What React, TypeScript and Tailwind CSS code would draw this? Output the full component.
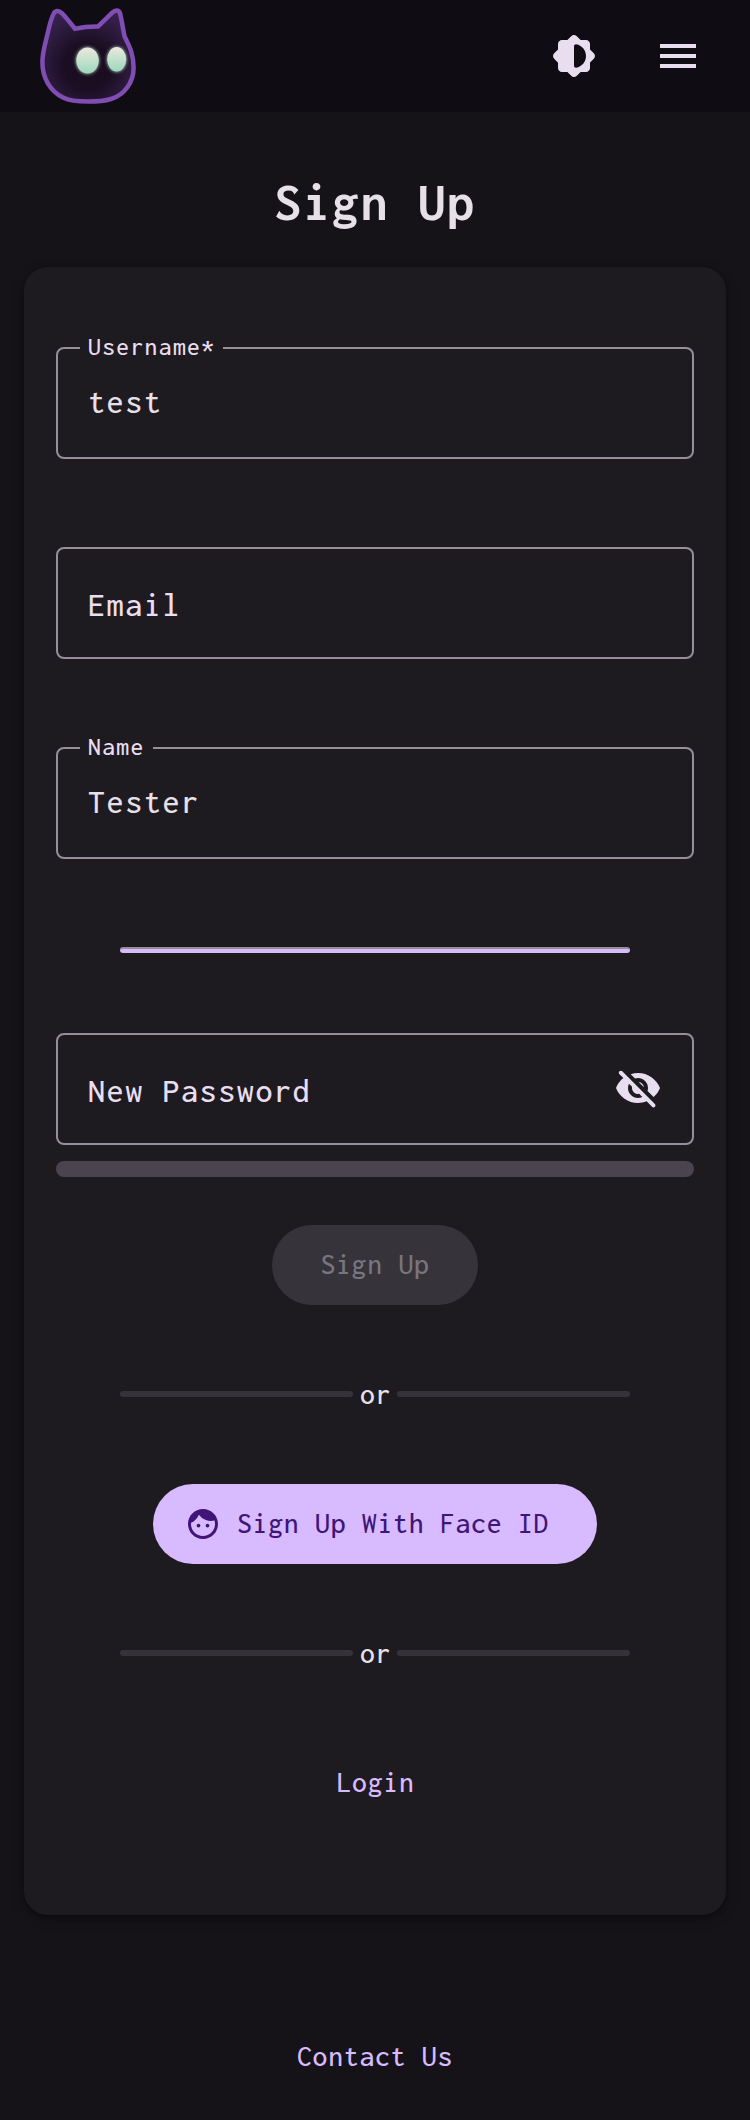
import React from "react";
import { MdFace, MdMenu } from "react-icons/md";

function CatLogo() {
  return (
    <svg width="112" height="112" viewBox="32 0 112 112" className="block">
      <defs>
        <radialGradient id="fur" gradientUnits="userSpaceOnUse" cx="88" cy="66" r="62">
          <stop offset="0" stopColor="#1a0d20" />
          <stop offset="0.38" stopColor="#1b0e22" />
          <stop offset="0.75" stopColor="#2f1c42" />
          <stop offset="1" stopColor="#3a2350" />
        </radialGradient>
        <linearGradient id="eye" x1="0" y1="0" x2="0" y2="1">
          <stop offset="0" stopColor="#ece9df" />
          <stop offset="1" stopColor="#9bd8b9" />
        </linearGradient>
        <filter id="glow" x="-40%" y="-40%" width="180%" height="180%">
          <feGaussianBlur stdDeviation="1.6" />
        </filter>
      </defs>
      <path
        d="M75 28.7 Q86 26.4 98 26.6 L112 12.8 C115.5 9.4 119.2 9.7 120.2 14 C122.2 22 122.8 29 124.6 36.5 C128.5 44.500 133.600 53 133.600 68 C133.600 82 124.500 95 111 99 C104 101.200 97 101.600 88 101.600 C78 101.600 70 101 63 97.500 C50 91 42.400 78 42.400 62 C42.400 52 45.500 43 47.500 34 C49.500 25 51 18.500 53.500 14 C55.300 10.300 58.500 9.900 61.500 12.800 C66.500 17.500 70.500 23.500 75 28.700Z"
        fill="url(#fur)"
        stroke="#804eb3"
        strokeWidth="4.500"
        strokeLinejoin="miter"
      />
      <g filter="url(#glow)" fill="#a9cbb7" opacity="0.75">
        <ellipse cx="87.500" cy="60.500" rx="12" ry="13.700" />
        <ellipse cx="116.700" cy="59.300" rx="10.200" ry="12.900" />
      </g>
      <ellipse cx="87.500" cy="60.500" rx="11.200" ry="13" fill="url(#eye)" />
      <ellipse cx="116.700" cy="59.300" rx="9.500" ry="12.200" fill="url(#eye)" />
    </svg>
  );
}

function BrightnessIcon() {
  return (
    <svg viewBox="0 0 24 24" className="size-12" fill="currentColor">
      <path d="M20 15.31l1.9-1.9c.78-.78.78-2.05 0-2.83L20 8.69V6c0-1.1-.9-2-2-2h-2.69l-1.9-1.9c-.78-.78-2.05-.78-2.83 0L8.69 4H6c-1.1 0-2 .9-2 2v2.69l-1.9 1.9c-.78.78-.78 2.05 0 2.83l1.9 1.9V18c0 1.1.9 2 2 2h2.69l1.9 1.9c.78.78 2.05.78 2.83 0l1.9-1.9H18c1.1 0 2-.9 2-2v-2.69zm-8 1.59V7.1c0-.61.55-1.11 1.15-.99C15.91 6.65 18 9.07 18 12s-2.09 5.35-4.85 5.89c-.6.12-1.15-.38-1.15-.99z" />
    </svg>
  );
}

function EyeOffIcon() {
  return (
    <svg viewBox="0 0 24 24" className="size-12 text-[#e9def0]" fill="currentColor">
      <path d="M12 6.5c2.76 0 5 2.24 5 5 0 .51-.1 1-.24 1.46l3.06 3.06c1.39-1.23 2.49-2.77 3.18-4.53C21.27 7.11 17 4 12 4c-1.27 0-2.49.2-3.64.57l2.17 2.17c.47-.14.96-.24 1.47-.24zM2.71 3.16c-.39.39-.39 1.02 0 1.41l1.97 1.97C3.06 7.83 1.77 9.53 1 11.5 2.73 15.89 7 19 12 19c1.52 0 2.97-.3 4.31-.82l2.72 2.72c.39.39 1.02.39 1.41 0 .39-.39.39-1.02 0-1.41L4.13 3.16c-.39-.39-1.03-.39-1.42 0zM12 16.5c-2.76 0-5-2.24-5-5 0-.77.18-1.5.49-2.14l1.57 1.57c-.03.18-.06.37-.06.57 0 1.66 1.34 3 3 3 .2 0 .38-.03.57-.07L14.14 16c-.65.32-1.37.5-2.14.5zm2.97-5.33c-.15-1.4-1.25-2.49-2.64-2.64l2.64 2.64z" />
    </svg>
  );
}

interface FieldProps {
  label: string;
  value?: string;
  trailing?: React.ReactNode;
}

function Field({ label, value, trailing }: FieldProps) {
  return (
    <div className="relative flex h-28 w-full items-center justify-between rounded-lg border-2 border-[#968e9b] px-[30px]">
      {value && (
        <span className="absolute -top-[18px] left-[22px] flex h-8 items-center whitespace-nowrap bg-[#1e1b20] px-2 text-[25.5px] leading-8 tracking-[1.4px] text-[#e9def0]">
          {label}
        </span>
      )}
      <span
        className={
          value
            ? "pb-0.5 text-[34px] leading-10 tracking-[1.6px] text-[#e7e0e8]"
            : "pt-1 text-[34px] leading-10 tracking-[1.6px] text-[#e9def0]"
        }
      >
        {value ?? label}
      </span>
      {trailing}
    </div>
  );
}

function OrDivider() {
  return (
    <div className="flex h-8 w-[510px] items-center">
      <span className="h-1.5 flex-1 rounded-full bg-[#36323a]" />
      <span className="w-11 pl-px text-center text-[29.75px] leading-8 tracking-[0.7px] text-[#e7e0e8]">or</span>
      <span className="h-1.5 flex-1 rounded-full bg-[#36323a]" />
    </div>
  );
}

export default function App() {
  return (
    <div className="flex h-[2120px] w-[750px] flex-col overflow-hidden bg-[#151318] font-['Inconsolata','Noto_Sans_Mono','Liberation_Mono',monospace] font-[450]">
      <header className="flex h-28 shrink-0 items-center justify-between bg-[#0f0d13] pl-8 pr-12 text-[#e9def0]">
        <CatLogo />
        <div className="flex gap-14">
          <BrightnessIcon />
          <MdMenu className="size-12" />
        </div>
      </header>

      <h1 className="flex h-[155px] shrink-0 items-center justify-center pt-6 text-[54px] font-bold leading-[64px] tracking-[1.8px] text-[#e7e0e8]">
        Sign Up
      </h1>

      <main className="mx-6 flex h-[1648px] shrink-0 flex-col items-center rounded-3xl bg-[#1e1b20] px-8 pt-20 shadow-[0_2px_4px_rgba(0,0,0,0.3),0_4px_12px_2px_rgba(0,0,0,0.2)]">
        <div className="flex w-full flex-col gap-[88px]">
          <Field label="Username*" value="test" />
          <Field label="Email" />
          <Field label="Name" value="Tester" />
        </div>

        <div className="mt-[88px] h-1.5 w-[510px] overflow-hidden rounded-full border-t-2 border-[#968e9b] bg-[#d7baff]" />

        <div className="mt-20 w-full">
          <Field label="New Password" trailing={<EyeOffIcon />} />
        </div>
        <div className="mt-4 h-4 w-full rounded-full bg-[#4a444f]" />

        <button className="mt-12 flex h-20 w-[206px] shrink-0 items-center justify-center rounded-full bg-[#36333a] pb-px text-[29.75px] tracking-[0.73px] text-[#79757e]">
          Sign Up
        </button>

        <div className="mt-[73px]">
          <OrDivider />
        </div>

        <button className="mt-[74px] flex h-20 w-[444px] shrink-0 items-center gap-4 rounded-full bg-[#d7baff] pl-8 text-[29.75px] tracking-[0.73px] text-[#411478]">
          <MdFace className="size-9" />
          <span className="whitespace-nowrap pb-0.5">Sign Up With Face ID</span>
        </button>

        <div className="mt-[73px]">
          <OrDivider />
        </div>

        <a className="mt-[93px] pl-px text-[29.75px] leading-10 tracking-[0.73px] text-[#d7baff]">Login</a>
      </main>

      <footer className="flex justify-center pt-[121px] text-[29.75px] leading-10 tracking-[0.73px] text-[#d7baff]">
        Contact Us
      </footer>
    </div>
  );
}
